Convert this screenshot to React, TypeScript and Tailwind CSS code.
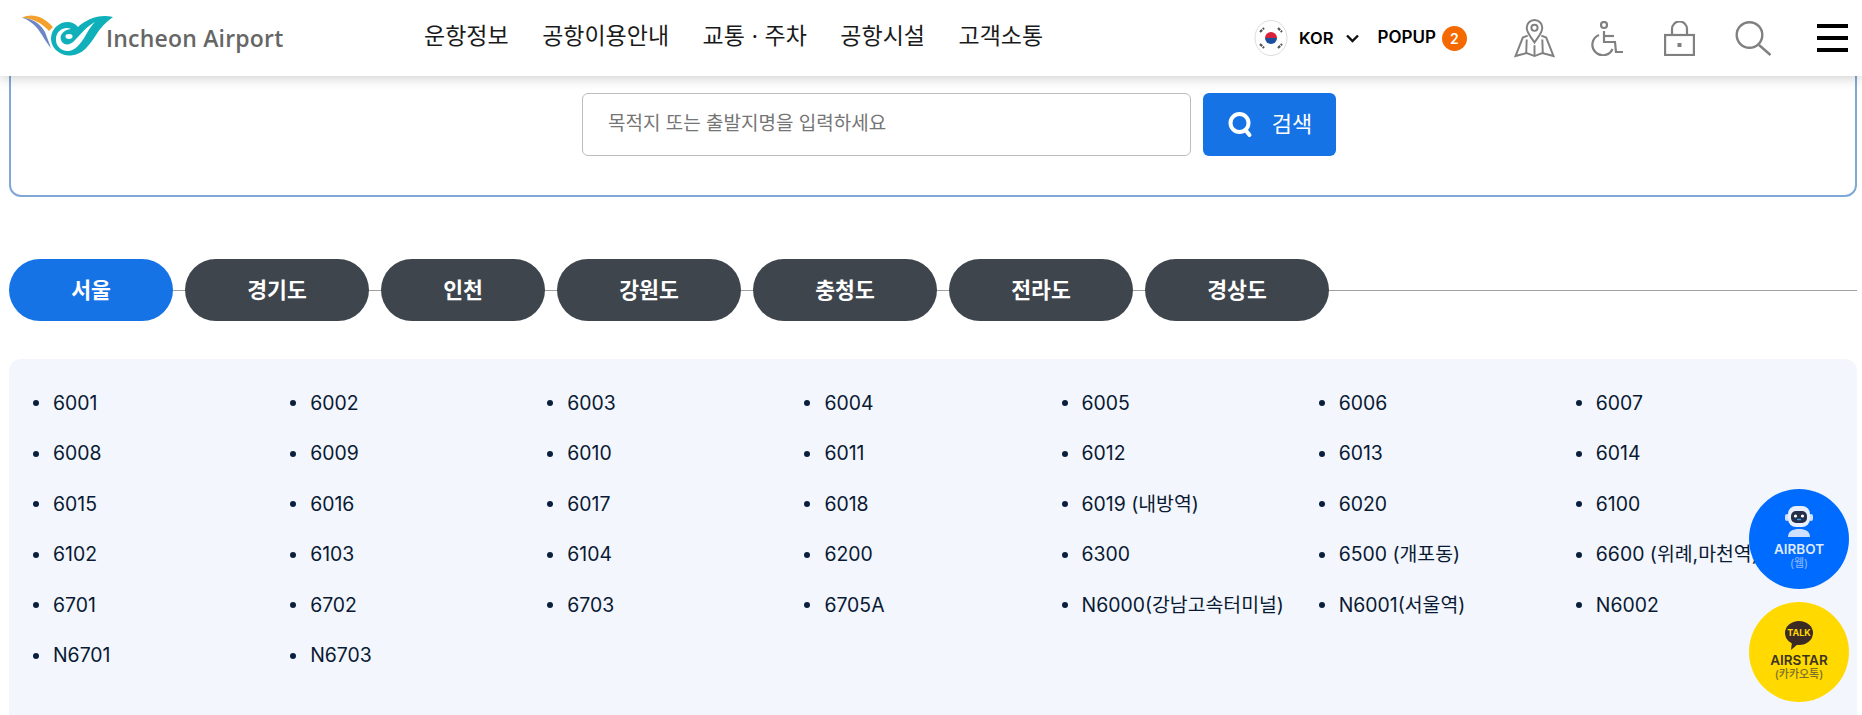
import React from "react";

const KR = '"Inter","Noto Sans CJK KR",sans-serif';

const rows: string[][] = [
  ["6001", "6002", "6003", "6004", "6005", "6006", "6007"],
  ["6008", "6009", "6010", "6011", "6012", "6013", "6014"],
  ["6015", "6016", "6017", "6018", "6019 (내방역)", "6020", "6100"],
  ["6102", "6103", "6104", "6200", "6300", "6500 (개포동)", "6600 (위례,마천역)"],
  ["6701", "6702", "6703", "6705A", "N6000(강남고속터미널)", "N6001(서울역)", "N6002"],
  ["N6701", "N6703"],
];
const tabs = [
  ["서울", "w-[164px]"],
  ["경기도", "w-[184px]"],
  ["인천", "w-[164px]"],
  ["강원도", "w-[184px]"],
  ["충청도", "w-[184px]"],
  ["전라도", "w-[184px]"],
  ["경상도", "w-[184px]"],
];
const nav = ["운항정보", "공항이용안내", "교통 · 주차", "공항시설", "고객소통"];

function Logo() {
  return (
    <svg width="94" height="42" viewBox="6 6 94 42" className="shrink-0">
      <path d="M7 9.500 C17 5 28 8 38 19 L34 23 C27 15 18 11 7 9.500Z" fill="#f4a02d" />
      <path d="M6.500 9.500 C16 10 25 15 30 24 C32 29 34 35 36 40 C30 33 27 26 22 20 C18 15 12 11 6.500 9.500Z" fill="#6f86c4" />
      <path
        d="M98 9 C84 6 72 11 63 19 C55 9 37 15 36 30 C36 42 47 48 56 47.500 C68 47 75 36 81 27 C85 20 91 14 98 9Z"
        fill="#0fb0ba"
      />
      <path
        d="M80 14 C72 18 66 26 60 32 C56 37 50 38 47 34 C43 28 48 22 56 21 C50 18 42 22 41 30 C40 38 47 44 54 43 C62 42 68 32 72 25 C75 20 77 17 80 14Z"
        fill="#fff"
      />
      <ellipse cx="54" cy="28.500" rx="3.500" ry="2.400" fill="#fff" />
    </svg>
  );
}

function Flag() {
  return (
    <svg width="34" height="36" viewBox="0 0 34 36" className="shrink-0">
      <ellipse cx="17" cy="18" rx="16" ry="17.500" fill="#fff" stroke="#dcdcdc" />
      <path d="M11 18a6 6 0 0 1 12 0z" fill="#d8213a" />
      <path d="M11 18a6 6 0 0 0 12 0z" fill="#1c4fa0" />
      <g stroke="#555" strokeWidth="2.200" strokeDasharray="3 1">
        <path d="M6 12l4-4M24 8l4 4M6 24l4 4M24 28l4-4" />
      </g>
    </svg>
  );
}

function MapIcon() {
  return (
    <svg width="41" height="39" viewBox="0 0 42 40" fill="none" stroke="#808080" strokeWidth="2" className="shrink-0">
      <path d="M21 24 C17 18 13 14 13 9 A8 8 0 0 1 29 9 C29 14 25 18 21 24Z" />
      <circle cx="21" cy="9" r="3.200" />
      <path d="M14 17 L9 19 L1.500 38 L13 35 L21 38 L29 35 L40.500 38 L33 19 L28 17" />
      <path d="M13 21 L12.500 35 M21 27 L21 38 M29 21 L29.500 35" />
    </svg>
  );
}
function WheelIcon() {
  return (
    <svg width="33" height="35" viewBox="0 0 33 35" fill="none" stroke="#808080" strokeWidth="2.200" className="shrink-0">
      <circle cx="13" cy="4" r="3" />
      <path d="M13 10 V21 H24 L25 31 H32" />
      <path d="M13 15 H23" />
      <path d="M8 14 A10.500 10.500 0 1 0 21.500 28" />
    </svg>
  );
}
function LockIcon() {
  return (
    <svg width="31" height="35" viewBox="0 0 31 35" fill="none" stroke="#808080" strokeWidth="2.200" className="shrink-0">
      <rect x="1.100" y="14" width="28.800" height="20" />
      <path d="M8 14 V8 A7.500 7.500 0 0 1 23 8 V14" />
      <rect x="13.500" y="22" width="4" height="4" fill="#808080" stroke="none" />
    </svg>
  );
}
function SearchIcon() {
  return (
    <svg width="37" height="35" viewBox="0 0 37 35" fill="none" stroke="#808080" strokeWidth="2.400" className="shrink-0">
      <circle cx="14.500" cy="14" r="12.800" />
      <path d="M24 24 L35.500 34" />
    </svg>
  );
}

function Robot() {
  return (
    <svg width="30" height="32" viewBox="0 0 30 32" className="shrink-0">
      <rect x="1" y="9" width="4" height="7" rx="2" fill="#cfe0ff" />
      <rect x="25" y="9" width="4" height="7" rx="2" fill="#cfe0ff" />
      <rect x="4" y="1" width="22" height="21" rx="8" fill="#e8efff" />
      <rect x="7" y="6" width="16" height="12" rx="5" fill="#27304a" />
      <circle cx="11.500" cy="11" r="1.600" fill="#fff" />
      <circle cx="18.500" cy="11" r="1.600" fill="#fff" />
      <path d="M13 14.500h4" stroke="#3aa0ff" strokeWidth="1.400" />
      <path d="M4 32 C4 26 9 24 15 24 C21 24 26 26 26 32Z" fill="#cfe0ff" />
    </svg>
  );
}

function Talk() {
  return (
    <div className="relative flex h-[24px] w-[28px] items-center justify-center rounded-[50%] bg-[#3c2a24]">
      <span className="text-[9px] font-bold leading-none text-[#ffd900]" style={{ fontFamily: "Inter" }}>TALK</span>
      <svg width="9" height="8" viewBox="0 0 9 8" className="absolute bottom-[-5px] left-[5px]">
        <path d="M2 0 L1 8 L9 1Z" fill="#3c2a24" />
      </svg>
    </div>
  );
}

export default function App() {
  return (
    <div className="relative h-[715px] w-full overflow-hidden bg-white" style={{ fontFamily: KR }}>
      <header className="relative z-10 flex h-[76px] items-center bg-white pl-[21px] shadow-[0_2px_12px_rgba(0,0,0,0.2)]">
        <div className="flex w-[403px] shrink-0 -translate-y-[3px] items-end">
          <Logo />
          <span
            className="-ml-[9px] mb-[3px] text-[23px] font-semibold leading-[30px] tracking-[0.2px] text-[#666666]"
            style={{ fontFamily: '"Open Sans",sans-serif' }}
          >
            Incheon Airport
          </span>
        </div>
        <nav className="flex w-[830px] shrink-0 -translate-y-[2px] items-center gap-[33.500px] text-[23px] text-[#1a1a1a]">
          {nav.map((n) => (
            <span key={n}>{n}</span>
          ))}
        </nav>
        <Flag />
        <span className="ml-[11px] text-[16.500px] font-semibold text-black" style={{ fontFamily: "Inter" }}>KOR</span>
        <svg width="15" height="9" viewBox="0 0 14 9" fill="none" stroke="#111" strokeWidth="2.400" className="ml-[12px] shrink-0">
          <path d="M1.500 1.500 L7 7 L12.500 1.500" />
        </svg>
        <span className="ml-[17px] text-[17px] font-semibold text-black" style={{ fontFamily: "Inter" }}>POPUP</span>
        <span className="ml-[6px] flex h-[25px] w-[25px] items-center justify-center rounded-full bg-[#f56a00] text-[14px] font-semibold text-white">2</span>
        <div className="ml-[47px] flex items-center">
          <MapIcon />
          <div className="ml-[36px]"><WheelIcon /></div>
          <div className="ml-[40px]"><LockIcon /></div>
          <div className="ml-[40px]"><SearchIcon /></div>
          <div className="ml-[45px] flex h-[28px] w-[31px] flex-col justify-between">
            <div className="h-[4px] bg-black" />
            <div className="h-[4px] bg-black" />
            <div className="h-[4px] bg-black" />
          </div>
        </div>
      </header>

      <main className="pl-[9px] pr-[5px]">
        <section className="-mt-[20px] flex h-[141px] justify-center gap-[12px] rounded-[12px] border-2 border-[#80a8d6] pl-[52px] pt-[35px]">
          <div className="flex h-[63px] w-[609px] items-center rounded-[6px] border border-[#bdbdbd] bg-white pl-[25px] text-[19px] text-[#757575]">
            목적지 또는 출발지명을 입력하세요
          </div>
          <button className="flex h-[63px] w-[133px] items-center justify-center gap-[18px] rounded-[6px] bg-[#1673e6] text-[22px] text-white">
            <svg width="27" height="28" viewBox="0 0 26 28" fill="none" stroke="#fff" strokeWidth="4">
              <circle cx="12" cy="12" r="9" />
              <path d="M18 19 L22 24" strokeLinecap="round" />
            </svg>
            검색
          </button>
        </section>

        <div className="relative mt-[62px] flex items-center gap-[12px]">
          <div className="absolute left-0 right-0 top-1/2 h-px bg-[#a0a0a0]" />
          {tabs.map(([t, w], i) => (
            <div
              key={t}
              className={`relative flex h-[62px] items-center justify-center rounded-[31px] text-[21.600px] font-bold text-white ${w} ${
                i === 0 ? "bg-[#1673e6]" : "bg-[#3e454d]"
              }`}
            >
              {t}
            </div>
          ))}
        </div>

        <section className="mt-[38px] h-[400px] rounded-[12px] bg-[#f3f6fd] px-[24px] pt-[19px]">
          {rows.map((r, i) => (
            <ul key={i} className="grid h-[50.500px] grid-cols-7 items-center text-[19.400px] text-[#0a1a33]">
              {r.map((c) => (
                <li key={c} className="flex items-center whitespace-nowrap">
                  <span className="mr-[14px] h-[6px] w-[6px] shrink-0 rounded-full bg-[#0a1f3d]" />
                  {c}
                </li>
              ))}
            </ul>
          ))}
        </section>
      </main>

      <aside className="absolute right-[13px] top-[489px] z-20 flex flex-col gap-[13px]">
        <div className="flex h-[100px] w-[100px] flex-col items-center justify-center rounded-full bg-[#006cff] pb-[3px]">
          <Robot />
          <span className="mt-[5px] text-[13.500px] font-semibold leading-[15px] text-[#dfeaff]">AIRBOT</span>
          <span className="text-[11px] leading-[13px] text-[#8fbaff]">(웹)</span>
        </div>
        <div className="flex h-[100px] w-[100px] flex-col items-center justify-center rounded-full bg-[#ffd900] pb-[3px]">
          <Talk />
          <span className="mt-[8px] text-[13.500px] font-semibold leading-[15px] text-[#3c3320]">AIRSTAR</span>
          <span className="text-[11px] font-medium leading-[13px] text-[#7d6f2a]">(카카오톡)</span>
        </div>
        <div className="h-[100px] w-[100px] rounded-full bg-[#3e454d]" />
      </aside>
    </div>
  );
}
